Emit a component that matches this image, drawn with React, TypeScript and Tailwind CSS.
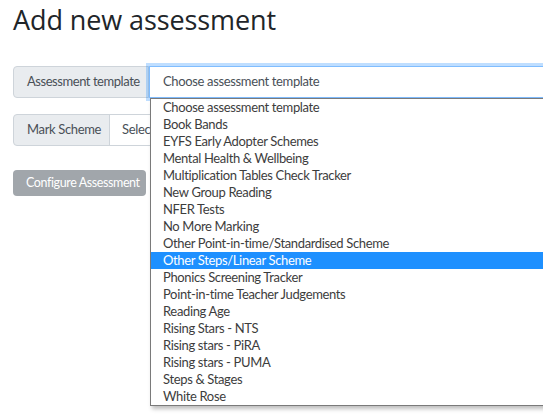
const templates = [
  'Choose assessment template',
  'Book Bands',
  'EYFS Early Adopter Schemes',
  'Mental Health & Wellbeing',
  'Multiplication Tables Check Tracker',
  'New Group Reading',
  'NFER Tests',
  'No More Marking',
  'Other Point-in-time/Standardised Scheme',
  'Other Steps/Linear Scheme',
  'Phonics Screening Tracker',
  'Point-in-time Teacher Judgements',
  'Reading Age',
  'Rising Stars - NTS',
  'Rising stars - PiRA',
  'Rising stars - PUMA',
  'Steps & Stages',
  'White Rose',
];

const selected = 'Other Steps/Linear Scheme';

const App = () => {
  return (
    <div className="relative h-[419px] w-[543px] overflow-hidden bg-white font-['Lato',sans-serif] text-[13px] tracking-[-0.35px] text-[#212529]">
      <div className="px-[13px]">
        <h1 className="font-['Open_Sans',sans-serif] text-[27px] font-medium leading-[40px] tracking-[-0.1px]">Add new assessment</h1>

        {/* Assessment template */}
        <div className="mt-[26px] flex h-[32px]">
          <span className="flex w-[136px] shrink-0 items-center whitespace-nowrap rounded-l-[4px] border border-[#ced4da] bg-[#e9ecef] pl-[13px] tracking-[-0.45px] text-[#495057]">
            Assessment template
          </span>
          <div className="flex w-[420px] shrink-0 items-center whitespace-nowrap border border-[#80bdff] bg-white pl-[13px] text-[#495057] shadow-[0_0_0_3px_rgba(0,123,255,0.25)]">
            Choose assessment template
          </div>
        </div>

        {/* Mark scheme (right part hidden under the open list) */}
        <div className="mt-[16px] flex h-[32px]">
          <span className="flex w-[97px] shrink-0 items-center whitespace-nowrap rounded-l-[4px] border border-[#ced4da] bg-[#e9ecef] pl-[13px] text-[#495057]">
            Mark Scheme
          </span>
          <div className="-ml-px flex w-[41px] shrink-0 items-center overflow-hidden whitespace-nowrap border border-r-0 border-[#ced4da] bg-white pl-[12px] text-[#495057]">
            Select mark scheme
          </div>
        </div>

        <button className="mt-[24px] h-[26px] w-[133px] whitespace-nowrap rounded-[4px] bg-[#a1a6ab] pl-[13px] text-left text-[12.5px] tracking-[-0.4px] text-white">
          Configure Assessment
        </button>
      </div>

      {/* native select dropdown list */}
      <div className="absolute left-[150px] top-[98px] w-[420px] border border-[#7a7a7a] bg-white shadow-[2px_3px_4px_rgba(0,0,0,0.25)]">
        {templates.map((t) => (
          <div
            key={t}
            className={
              t === selected
                ? 'h-[17px] whitespace-nowrap bg-[#1e90ff] pl-[12px] leading-[17px] text-white'
                : 'h-[17px] whitespace-nowrap pl-[12px] leading-[17px] text-[#3d3d3d]'
            }
          >
            {t}
          </div>
        ))}
      </div>
    </div>
  );
};

export default App;
